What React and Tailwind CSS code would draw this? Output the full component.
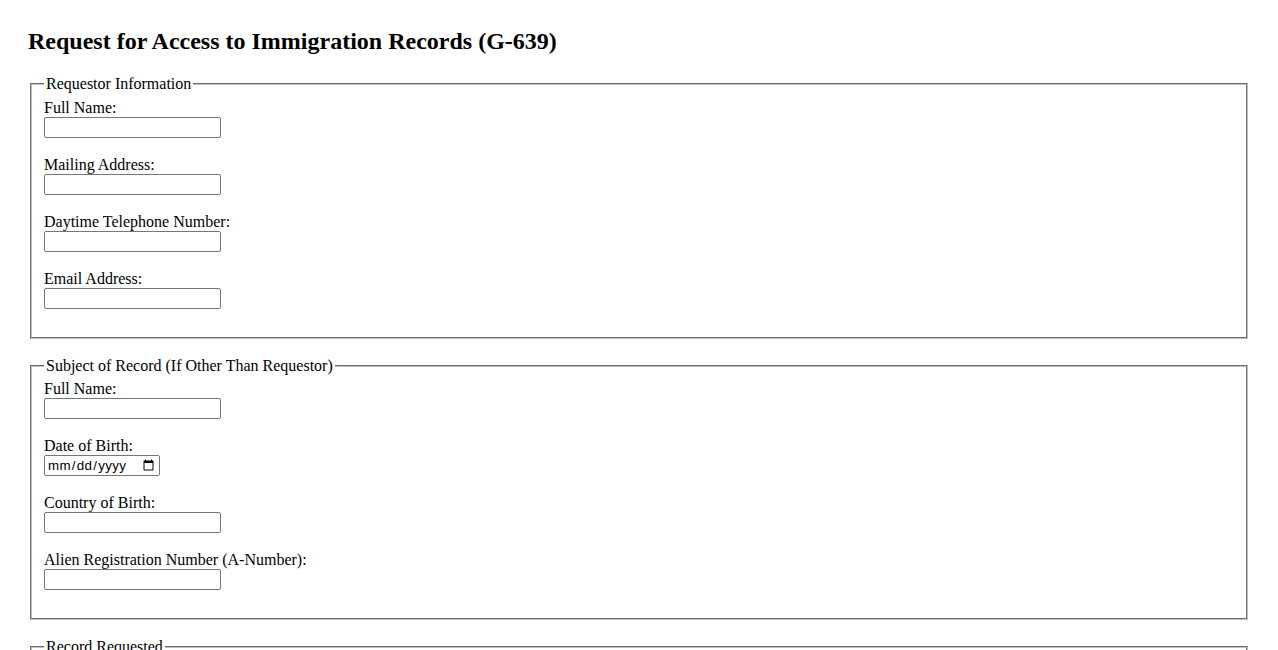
import React from "react";

function Field({ label, type = "text" }) {
  return (
    <>
      <label>{label}</label>
      <br />
      {type === "date" ? (
        <input
          type="date"
          className="w-[116px] h-[21px] border border-[#767676] rounded-[2px] px-[2px] py-px font-['Liberation_Sans',Arial,sans-serif] text-[13.333px] tracking-[0.3px] leading-[normal] bg-white align-baseline"
        />
      ) : (
        <input
          type="text"
          className="w-[177px] h-[21px] border border-[#767676] rounded-[2px] px-[2px] py-px font-['Liberation_Sans',Arial,sans-serif] text-[13.333px] leading-[normal] bg-white align-baseline"
        />
      )}
      <br />
      <br />
    </>
  );
}

function Section({ legend, fields }) {
  return (
    <fieldset className="mx-[2px] mb-[18px] px-[12px] pt-[5.6px] pb-[10px] border-2 [border-style:groove] border-[rgb(192,192,192)]">
      <legend className="px-[2px]">{legend}</legend>
      {fields.map((f) => (
        <Field key={f.label} label={f.label} type={f.type} />
      ))}
    </fieldset>
  );
}

export default function App() {
  return (
    <div className="bg-white min-h-screen p-[28px] font-['Liberation_Serif','Times_New_Roman',serif] text-black text-[16px] leading-[normal]">
      <h2 className="text-[24px] font-bold mb-[20px] leading-[normal]">
        Request for Access to Immigration Records (G-639)
      </h2>
      <Section
        legend="Requestor Information"
        fields={[
          { label: "Full Name:" },
          { label: "Mailing Address:" },
          { label: "Daytime Telephone Number:" },
          { label: "Email Address:" },
        ]}
      />
      <Section
        legend="Subject of Record (If Other Than Requestor)"
        fields={[
          { label: "Full Name:" },
          { label: "Date of Birth:", type: "date" },
          { label: "Country of Birth:" },
          { label: "Alien Registration Number (A-Number):" },
        ]}
      />
      <Section
        legend="Record Requested"
        fields={[
          { label: "Type of Record:" },
          { label: "Purpose of Request:" },
        ]}
      />
    </div>
  );
}
